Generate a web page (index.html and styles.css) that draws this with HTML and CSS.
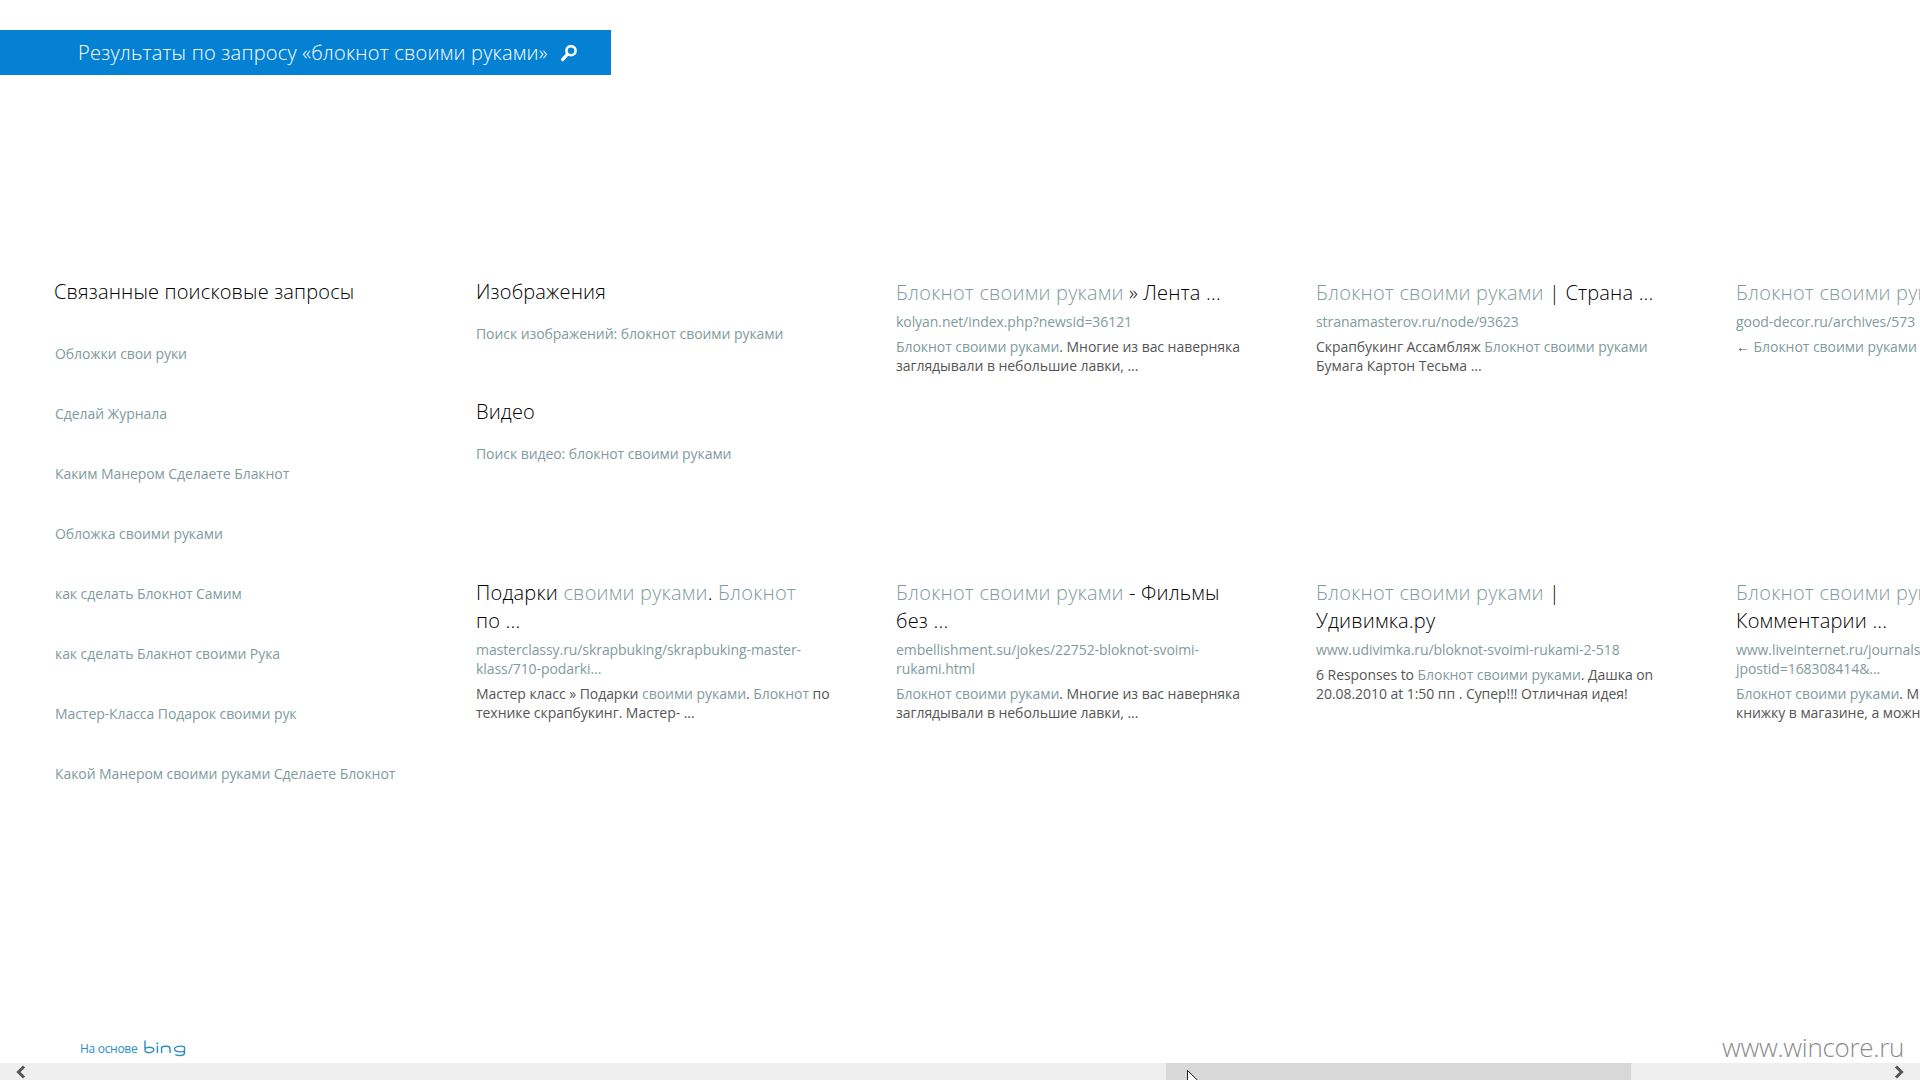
FILE: index.html
```html
<!DOCTYPE html>
<html lang="ru">
<head>
<meta charset="utf-8">
<title>Результаты поиска</title>
<link rel="stylesheet" href="styles.css">
</head>
<body>
<div class="page">
  <header class="banner">
    <span class="banner-text">Результаты по запросу «блокнот своими руками»</span>
    <svg class="search-icon" width="18" height="18" viewBox="0 0 18 18"><circle cx="11" cy="6.7" r="4.6" fill="none" stroke="#fff" stroke-width="2.6"/><path d="M7.5 10.2 2.6 15.6" stroke="#fff" stroke-width="3.2" stroke-linecap="round"/></svg>
  </header>
  <main class="content">
    <section class="related">
      <h2 class="heading">Связанные поисковые запросы</h2>
      <ul class="related-list">
        <li>Обложки свои руки</li>
        <li>Сделай Журнала</li>
        <li>Каким Манером Сделаете Блакнот</li>
        <li>Обложка своими руками</li>
        <li>как сделать Блокнот Самим</li>
        <li>как сделать Блакнот своими Рука</li>
        <li>Мастер-Класса Подарок своими рук</li>
        <li>Какой Манером своими руками Сделаете Блокнот</li>
      </ul>
    </section>
    <section class="results">
      <div class="media">
        <div class="media-block">
          <h2 class="heading">Изображения</h2>
          <p class="media-link">Поиск изображений: блокнот своими руками</p>
        </div>
        <div class="media-block">
          <h2 class="heading">Видео</h2>
          <p class="media-link">Поиск видео: блокнот своими руками</p>
        </div>
      </div>
      <article class="result">
        <h3 class="title"><em>Блокнот своими руками</em> » Лента ...</h3>
        <p class="url">kolyan.net/index.php?newsid=36121</p>
        <p class="snippet"><em>Блокнот своими руками</em>. Многие из вас наверняка<br>заглядывали в небольшие лавки, ...</p>
      </article>
      <article class="result">
        <h3 class="title"><em>Блокнот своими руками</em> | Страна ...</h3>
        <p class="url">stranamasterov.ru/node/93623</p>
        <p class="snippet">Скрапбукинг Ассамбляж <em>Блокнот своими руками</em><br>Бумага Картон Тесьма ...</p>
      </article>
      <article class="result">
        <h3 class="title"><em>Блокнот своими руками</em> ...</h3>
        <p class="url">good-decor.ru/archives/573</p>
        <p class="snippet">← <em>Блокнот своими руками</em> ...</p>
      </article>
      <article class="result">
        <h3 class="title">Подарки <em>своими руками</em>. <em>Блокнот</em><br>по ...</h3>
        <p class="url">masterclassy.ru/skrapbuking/skrapbuking-master-<br>klass/710-podarki...</p>
        <p class="snippet">Мастер класс » Подарки <em>своими руками</em>. <em>Блокнот</em> по<br>технике скрапбукинг. Мастер- ...</p>
      </article>
      <article class="result">
        <h3 class="title"><em>Блокнот своими руками</em> - Фильмы<br>без ...</h3>
        <p class="url">embellishment.su/jokes/22752-bloknot-svoimi-<br>rukami.html</p>
        <p class="snippet"><em>Блокнот своими руками</em>. Многие из вас наверняка<br>заглядывали в небольшие лавки, ...</p>
      </article>
      <article class="result">
        <h3 class="title"><em>Блокнот своими руками</em> |<br>Удивимка.ру</h3>
        <p class="url">www.udivimka.ru/bloknot-svoimi-rukami-2-518</p>
        <p class="snippet">6 Responses to <em>Блокнот своими руками</em>. Дашка on<br>20.08.2010 at 1:50 пп . Супер!!! Отличная идея!</p>
      </article>
      <article class="result">
        <h3 class="title"><em>Блокнот своими руками</em> |<br>Комментарии ...</h3>
        <p class="url">www.liveinternet.ru/journalshowcomments.php?<br>jpostid=168308414&amp;...</p>
        <p class="snippet"><em>Блокнот своими руками</em>. Многие из вас<br>книжку в магазине, а можно ...</p>
      </article>
    </section>
  </main>
  <footer class="footer">
    <div class="powered">
      <span class="powered-text">На основе</span>
      <svg class="bing" width="42" height="17" viewBox="0 0 42 17" role="img" aria-label="bing"><g fill="none" stroke="#2a8ccb" stroke-width="1.4" stroke-linecap="round"><path d="M1 1v9c0 2 2 3 4.6 2.6 2.6-.4 4.2-1.4 4.2-2.9 0-1.6-2-2.6-4.4-2.5-1.6.1-3 .5-4.4 1.3"/><path d="M13.4 6.4v6.2"/><path d="M17.6 12.6V7.2c2.6-1.4 8.4-1.4 8.4 1.2v4.2"/><path d="M40.5 6.8c-2.4-1-10-1-10 2.2 0 3.2 7.6 3.2 10 2.2V7M40.5 11v2c0 2.6-5 3.2-8.6 1.8"/></g><circle cx="13.4" cy="3.4" r="1" fill="#2a8ccb"/></svg>
    </div>
    <span class="watermark">www.wincore.ru</span>
  </footer>
  <div class="scrollbar">
    <div class="track track-left"><svg width="12" height="14" viewBox="0 0 12 14"><path d="M9 1.5 3.5 7 9 12.5" fill="none" stroke="#555" stroke-width="3"/></svg></div>
    <div class="thumb"></div>
    <div class="track track-right"><svg width="12" height="14" viewBox="0 0 12 14"><path d="M3 1.5 8.5 7 3 12.5" fill="none" stroke="#555" stroke-width="3"/></svg></div>
    <svg class="cursor" width="12" height="18" viewBox="0 0 12 18"><path d="M.5.5v15l3.6-3.4 2.4 5.4 2.4-1-2.4-5.3h5z" fill="#fff" stroke="#222" stroke-width="1"/></svg>
  </div>
</div>
</body>
</html>
```
FILE: styles.css
```css
* { box-sizing: border-box; }
html, body { margin: 0; padding: 0; }
body { background: #fff; overflow: hidden; font-family: "Open Sans", "Noto Sans", "Liberation Sans", sans-serif; }
p, h2, h3, ul { margin: 0; padding: 0; font-weight: inherit; }
em { font-style: normal; color: #7f9b9d; }
.page { width: 1920px; height: 1080px; display: flex; flex-direction: column; overflow: hidden; position: relative; }
.banner { margin-top: 30px; width: 611px; height: 45px; flex: none; background: #0581d3; color: #fff; display: flex; align-items: center; padding-left: 78px; gap: 12px; }
.banner-text { font-size: 20px; font-weight: 300; letter-spacing: .22px; white-space: nowrap; }
.search-icon { flex: none; }
.content { display: flex; padding: 203px 0 0 54px; flex: 1; min-height: 0; }
.related { width: 422px; flex: none; }
.heading { font-size: 20px; line-height: 28px; font-weight: 300; color: #000; letter-spacing: .15px; white-space: nowrap; }
.related-list { list-style: none; margin-top: 18px; padding-left: 1px; }
.related-list li { height: 60px; font-size: 14px; line-height: 60px; color: #7f9b9d; letter-spacing: -.07px; white-space: nowrap; }
.results { display: grid; grid-template-columns: repeat(4, 420px); grid-template-rows: 300px 300px; }
.media { grid-row: 1; display: flex; flex-direction: column; gap: 55px; }
.media-link { margin-top: 18px; font-size: 14px; line-height: 19px; color: #7f9b9d; letter-spacing: -.07px; white-space: nowrap; }
.result { padding-top: 1px; }
.title { font-size: 20px; line-height: 28px; font-weight: 300; color: #000; letter-spacing: .2px; white-space: nowrap; }
.url { margin-top: 5px; font-size: 14px; line-height: 19px; color: #7f9b9d; letter-spacing: -.07px; white-space: nowrap; }
.snippet { margin-top: 6px; font-size: 14px; line-height: 19px; color: #555; letter-spacing: -.05px; white-space: nowrap; }
.footer { height: 42px; flex: none; display: flex; align-items: flex-start; justify-content: space-between; padding: 0 16px 0 80px; }
.powered { display: flex; align-items: center; gap: 7px; margin-top: 19px; }
.powered-text { font-size: 12px; line-height: 17px; color: #2a8ccb; letter-spacing: -.3px; white-space: nowrap; }
.watermark { font-size: 26px; line-height: 32px; font-weight: 300; color: #8c8c8c; letter-spacing: -.3px; margin-top: 10px; }
.scrollbar { height: 17px; flex: none; display: grid; grid-template-columns: 1166px 465px 1fr; background: #efefef; position: relative; }
.track { display: flex; align-items: center; }
.track-left { padding-left: 15px; }
.track-right { justify-content: flex-end; padding-right: 15px; }
.thumb { background: #d8d8d8; }
.cursor { position: absolute; left: 1187px; top: 7px; }
```
